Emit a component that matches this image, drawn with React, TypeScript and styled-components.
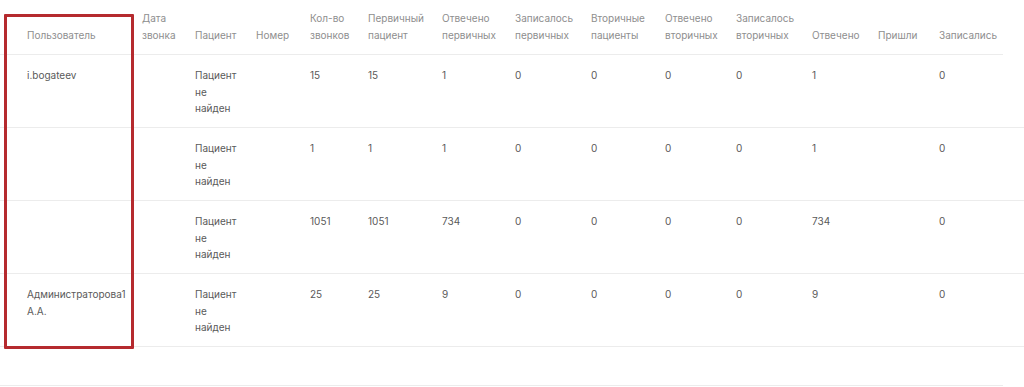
import { FC } from 'react';
import styled, { createGlobalStyle } from 'styled-components';

const GlobalStyle = createGlobalStyle`
  html, body {
    margin: 0;
    padding: 0;
    background: #fff;
  }

  body {
    font-family: Inter, 'Noto Sans', sans-serif;
    -webkit-font-smoothing: antialiased;
  }
`;

const COLUMNS = '27px 115px 53px 61px 54px 58px 74px 73px 76px 74px 71px 76px 66px 61px 64px';

const headers = [
  'Пользователь',
  'Дата звонка',
  'Пациент',
  'Номер',
  'Кол-во звонков',
  'Первичный пациент',
  'Отвечено первичных',
  'Записалось первичных',
  'Вторичные пациенты',
  'Отвечено вторичных',
  'Записалось вторичных',
  'Отвечено',
  'Пришли',
  'Записались',
];

type Row = {
  user: string;
  calls: string;
  primary: string;
  answeredPrimary: string;
  answered: string;
};

const rows: Row[] = [
  { user: 'i.bogateev', calls: '15', primary: '15', answeredPrimary: '1', answered: '1' },
  { user: '', calls: '1', primary: '1', answeredPrimary: '1', answered: '1' },
  { user: '', calls: '1051', primary: '1051', answeredPrimary: '734', answered: '734' },
  {
    user: 'Администраторова1 А.А.',
    calls: '25',
    primary: '25',
    answeredPrimary: '9',
    answered: '9',
  },
];

export default function App() {
  return (
    <>
      <GlobalStyle />
      <Page>
        <HeaderRow>
          <span />
          {headers.map((h) => (
            <HeadCell key={h}>{h}</HeadCell>
          ))}
        </HeaderRow>
        {rows.map((r, i) => (
          <TableRow key={i} row={r} />
        ))}
        <FooterRow />
        <Highlight />
      </Page>
    </>
  );
}

const TableRow: FC<{ row: Row }> = ({ row }) => {
  const cells = [
    row.user,
    '',
    'Пациент не найден',
    '',
    row.calls,
    row.primary,
    row.answeredPrimary,
    '0',
    '0',
    '0',
    '0',
    row.answered,
    '',
    '0',
  ];

  return (
    <BodyRow>
      <span />
      {cells.map((c, i) => (
        <Cell key={i} $narrow={i === 2}>
          {c}
        </Cell>
      ))}
    </BodyRow>
  );
};

const Page = styled.div`
  position: relative;
  width: 1024px;
  height: 387px;
  overflow: hidden;
  background: #fff;
`;

const HeaderRow = styled.div`
  display: grid;
  grid-template-columns: ${COLUMNS};
  align-items: end;
  width: 1003px;
  height: 55px;
  padding-bottom: 10px;
  box-sizing: border-box;
  border-bottom: 1px solid #ececec;
`;

const HeadCell = styled.div`
  font-size: 10px;
  line-height: 17px;
  color: #8e8e8e;
  padding-right: 8px;
`;

const BodyRow = styled.div`
  display: grid;
  grid-template-columns: ${COLUMNS};
  align-items: start;
  height: 73px;
  padding-top: 12px;
  box-sizing: border-box;
  border-bottom: 1px solid #ececec;
`;

const Cell = styled.div<{ $narrow?: boolean }>`
  font-size: 10px;
  line-height: 16.5px;
  color: #5a5a5a;
  padding-right: ${(p) => (p.$narrow ? '14px' : '6px')};
  overflow-wrap: normal;
`;

const FooterRow = styled.div`
  width: 1003px;
  height: 39px;
  box-sizing: border-box;
  border-bottom: 1px solid #ececec;
`;

const Highlight = styled.div`
  position: absolute;
  left: 4px;
  top: 14px;
  width: 130px;
  height: 335px;
  box-sizing: border-box;
  border: 3px solid #b52a2e;
  border-radius: 1px;
  pointer-events: none;
`;
